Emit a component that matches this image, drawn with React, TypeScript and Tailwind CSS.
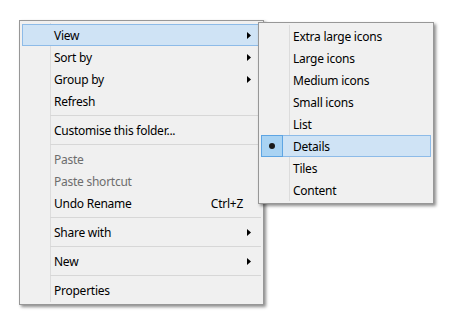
import React from "react";

const Arrow = () => (
  <svg width="4" height="7" viewBox="0 0 4 7" className="ml-auto">
    <polygon points="0,0 4,3.5 0,7" fill="#000" />
  </svg>
);

type Item =
  | { kind: "sep" }
  | { kind: "item"; label: string; arrow?: boolean; disabled?: boolean; shortcut?: string; hot?: boolean };

const mainItems: Item[] = [
  { kind: "item", label: "View", arrow: true, hot: true },
  { kind: "item", label: "Sort by", arrow: true },
  { kind: "item", label: "Group by", arrow: true },
  { kind: "item", label: "Refresh" },
  { kind: "sep" },
  { kind: "item", label: "Customise this folder..." },
  { kind: "sep" },
  { kind: "item", label: "Paste", disabled: true },
  { kind: "item", label: "Paste shortcut", disabled: true },
  { kind: "item", label: "Undo Rename", shortcut: "Ctrl+Z" },
  { kind: "sep" },
  { kind: "item", label: "Share with", arrow: true },
  { kind: "sep" },
  { kind: "item", label: "New", arrow: true },
  { kind: "sep" },
  { kind: "item", label: "Properties" },
];

const subItems = [
  "Extra large icons",
  "Large icons",
  "Medium icons",
  "Small icons",
  "List",
  "Details",
  "Tiles",
  "Content",
];

export default function App() {
  return (
    <div
      className="min-h-[330px] w-[455px] bg-white pt-[20px] pl-[19px] text-[12px] tracking-[-0.25px] text-black"
      style={{ fontFamily: '"Noto Sans", "Open Sans", sans-serif' }}
    >
      <div className="relative w-[245px] border border-[#979797] bg-[#f0f0f0] px-[2px] py-[3px] shadow-[2px_2px_3px_rgba(0,0,0,0.45)]">
        <div className="absolute left-[30px] top-[2px] bottom-[2px] w-px bg-[#dcdcdc]" />
        {mainItems.map((it, i) =>
          it.kind === "sep" ? (
            <div key={i} className="relative my-[3px] ml-[28px] h-px bg-[#d7d7d7]" />
          ) : (
            <div
              key={i}
              className={
                "relative flex h-[22px] items-center border pl-[31px] pr-[9px] leading-none " +
                (it.hot ? "border-[#8dbbe8] bg-[#cfe3f5]" : "border-transparent")
              }
            >
              <span className={"mt-[2px] " + (it.disabled ? "text-[#6d6d6d]" : "text-black")}>{it.label}</span>
              {it.shortcut && <span className="mt-[2px] ml-auto pr-[8px]">{it.shortcut}</span>}
              {it.arrow && <Arrow />}
            </div>
          )
        )}

        <div className="absolute left-[238px] top-[1px] w-[176px] border border-[#979797] bg-[#f0f0f0] p-[2px] shadow-[2px_2px_3px_rgba(0,0,0,0.45)]">
          <div className="absolute left-[30px] top-[2px] bottom-[2px] w-px bg-[#dcdcdc]" />
          {subItems.map((label) => {
            const sel = label === "Details";
            return (
              <div
                key={label}
                className={
                  "relative flex h-[22px] items-center border pl-[31px] leading-none " +
                  (sel ? "border-[#8dbbe8] bg-[#cfe3f5]" : "border-transparent")
                }
              >
                {sel && (
                  <div className="absolute left-[-1px] top-[-1px] flex h-[22px] w-[22px] items-center justify-center border border-[#5ea5e3] bg-[#a9d3f3]">
                    <div className="h-[6px] w-[6px] rounded-full bg-[#1a1a1a]" />
                  </div>
                )}
                <span className="mt-[2px]">{label}</span>
              </div>
            );
          })}
        </div>
      </div>
    </div>
  );
}
